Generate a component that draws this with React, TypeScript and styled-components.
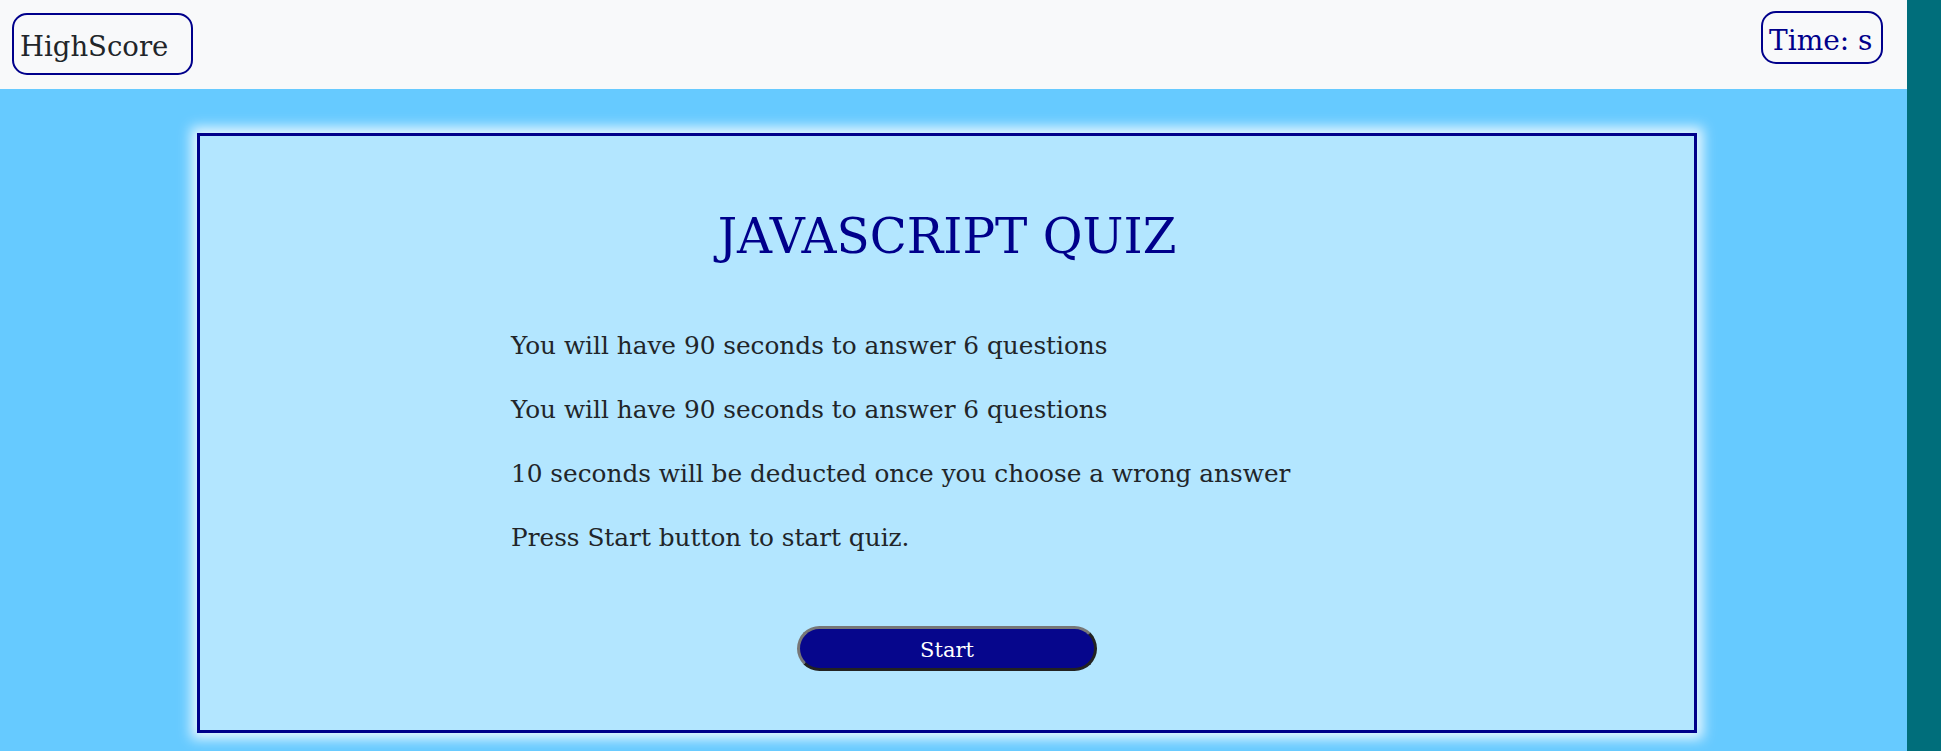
import React from "react";
import styled, { createGlobalStyle } from "styled-components";

const GlobalStyle = createGlobalStyle`
  html, body { margin: 0; padding: 0; }
  body {
    font-family: "DejaVu Serif", "Liberation Serif", serif;
    background: #66caff;
    color: #212529;
  }
`;

const Shell = styled.div`
  display: flex;
  min-height: 751px;
`;

const Page = styled.div`
  flex: 1;
  display: flex;
  flex-direction: column;
  background: #66caff;
`;

const ScrollStrip = styled.div`
  width: 34px;
  background: #006e7b;
`;

const Header = styled.header`
  height: 89px;
  background: #f8f9fa;
  display: flex;
  justify-content: space-between;
  align-items: flex-start;
  padding: 0 24px 0 12px;
  box-sizing: border-box;
`;

const Pill = styled.div<{ $w: number; $h: number; $top: number; $color: string; $size: number; $pad: number }>`
  margin-top: ${(p) => p.$top}px;
  width: ${(p) => p.$w}px;
  height: ${(p) => p.$h}px;
  box-sizing: border-box;
  border: 2px solid #00008b;
  border-radius: 15px;
  display: flex;
  align-items: center;
  padding: ${(p) => p.$pad}px 0 0 6px;
  font-size: ${(p) => p.$size}px;
  color: ${(p) => p.$color};
`;

const Main = styled.main`
  flex: 1;
  padding: 44px 0 18px 197px;
`;

const Card = styled.section`
  width: 1500px;
  height: 600px;
  box-sizing: border-box;
  border: 3px solid #00008b;
  background: #b3e6ff;
  box-shadow: 0 0 12px 6px rgba(255, 255, 255, 0.85);
  display: flex;
  flex-direction: column;
  align-items: center;
  padding-top: 71px;
`;

const Title = styled.h1`
  margin: 0;
  font-weight: 400;
  font-size: 48.5px;
  line-height: 1.2;
  color: #00008b;
`;

const Rules = styled.div`
  width: 872px;
  margin-top: 63px;
  display: flex;
  flex-direction: column;
  gap: 28px;
`;

const Rule = styled.p`
  margin: 0;
  font-size: 24.75px;
  line-height: 36px;
  color: #212529;
`;

const StartButton = styled.button`
  margin-top: 70px;
  width: 300px;
  height: 45px;
  box-sizing: border-box;
  border: 3px solid;
  border-color: #777 #222 #222 #777;
  border-radius: 23px;
  background: #06068c;
  color: #fff;
  font-family: "DejaVu Serif", "Liberation Serif", serif;
  font-size: 21px;
  padding: 2px 0 0;
  cursor: pointer;
`;

export default function App() {
  return (
    <>
      <GlobalStyle />
      <Shell>
        <Page>
          <Header>
            <Pill $w={181} $h={62} $top={13} $color="#212529" $size={27.5} $pad={4}>HighScore</Pill>
            <Pill $w={122} $h={53} $top={11} $color="#00008b" $size={28} $pad={5}>Time: s</Pill>
          </Header>
          <Main>
            <Card>
              <Title>JAVASCRIPT QUIZ</Title>
              <Rules>
                <Rule>You will have 90 seconds to answer 6 questions</Rule>
                <Rule>You will have 90 seconds to answer 6 questions</Rule>
                <Rule>10 seconds will be deducted once you choose a wrong answer</Rule>
                <Rule>Press Start button to start quiz.</Rule>
              </Rules>
              <StartButton>Start</StartButton>
            </Card>
          </Main>
        </Page>
        <ScrollStrip />
      </Shell>
    </>
  );
}
